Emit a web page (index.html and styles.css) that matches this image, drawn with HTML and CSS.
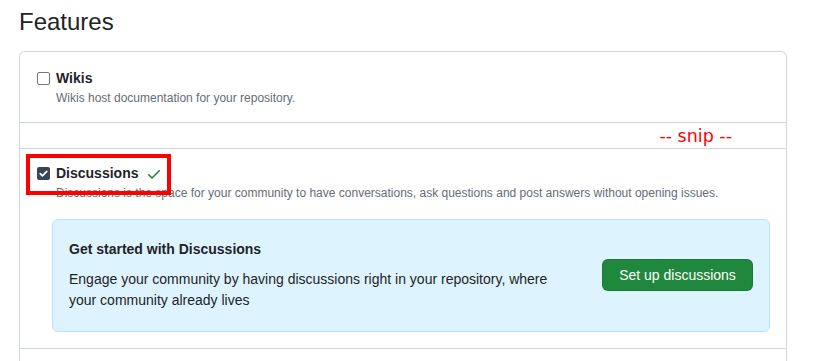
FILE: index.html
```html
<!DOCTYPE html>
<html>
<head>
<meta charset="utf-8">
<link rel="stylesheet" href="styles.css">
</head>
<body>
<h2 class="title">Features</h2>
<div class="box">
  <div class="row row-wiki">
    <div class="label-line">
      <span class="cb"></span>
      <span class="label">Wikis</span>
    </div>
    <p class="note">Wikis host documentation for your repository.</p>
  </div>
  <div class="snip-row"><span class="snip">-- snip --</span></div>
  <div class="row row-disc">
    <div class="label-line">
      <span class="cb cb-checked"><svg viewBox="0 0 13 13" width="13" height="13"><path d="M3.2 6.7l2.2 2.2 4.4-4.6" fill="none" stroke="#fff" stroke-width="1.7" stroke-linecap="round" stroke-linejoin="round"/></svg></span>
      <span class="label">Discussions</span>
      <svg class="ok" viewBox="0 0 16 16" width="16" height="16"><path fill="#1a7f37" d="M13.78 4.22a.75.75 0 0 1 0 1.06l-7.25 7.25a.75.75 0 0 1-1.06 0L2.22 9.28a.751.751 0 0 1 .018-1.042.751.751 0 0 1 1.042-.018L6 10.940l6.720-6.720a.75.75 0 0 1 1.06 0Z"/></svg>
    </div>
    <p class="note">Discussions is the space for your community to have conversations, ask questions and post answers without opening issues.</p>
    <div class="callout">
      <div class="callout-text">
        <h3 class="callout-title">Get started with Discussions</h3>
        <p class="callout-body">Engage your community by having discussions right in your repository, where your community already lives</p>
      </div>
      <button class="btn">Set up discussions</button>
    </div>
    <div class="highlight"></div>
  </div>
  <div class="row-rest"></div>
</div>
</body>
</html>
```

FILE: styles.css
```css
* { box-sizing: border-box; }
body {
  margin: 0;
  font-family: "Liberation Sans", Arial, sans-serif;
  color: #1f2328;
  background: #fff;
}
.title {
  margin: 4px 0 11px 19px;
  font-size: 24px;
  font-weight: 400;
  line-height: 36px;
}
.box {
  margin-left: 19px;
  width: 768px;
  border: 1px solid #d0d7de;
  border-radius: 6px;
  border-bottom: none;
  border-bottom-left-radius: 0;
  border-bottom-right-radius: 0;
}
.row {
  padding: 16px;
  border-bottom: 1px solid #d0d7de;
}
.row-wiki {
  padding-bottom: 15px;
}
.label-line {
  display: flex;
  align-items: center;
  height: 21px;
}
.cb {
  width: 13px;
  height: 13px;
  border: 1px solid #6e7781;
  border-radius: 2px;
  margin-left: 1px;
  margin-right: 6px;
  background: #fff;
  display: inline-flex;
}
.cb-checked {
  background: #3a4557;
  border-color: #3a4557;
  border-width: 0;
}
.label {
  font-size: 14px;
  font-weight: 700;
  line-height: 21px;
}
.ok {
  margin-left: 8px;
}
.note {
  margin: 0 0 0 20px;
  font-size: 12px;
  line-height: 18px;
  color: #656d76;
}
.snip-row {
  height: 26px;
  border-bottom: 1px solid #d0d7de;
  display: flex;
  justify-content: flex-end;
  align-items: center;
  padding-right: 54px;
}
.snip {
  font-family: "DejaVu Sans", sans-serif;
  font-size: 17.5px;
  color: #ff0000;
  line-height: 20px;
}
.row-disc {
  position: relative;
  padding-top: 14px;
}
.callout {
  margin: 17px 0 0 16px;
  background: #ddf4ff;
  border: 1px solid #b6e3ff;
  border-radius: 6px;
  padding: 19px 16px 20px 16px;
  display: flex;
  align-items: center;
}
.callout-text {
  flex: 1;
  margin-right: 40px;
}
.callout-title {
  margin: 0 0 9px 0;
  font-size: 14px;
  line-height: 21px;
  font-weight: 700;
}
.callout-body {
  margin: 0;
  font-size: 14px;
  line-height: 21px;
}
.btn {
  width: 151px;
  height: 32px;
  background: #1f883d;
  color: #fff;
  border: 1px solid rgba(31, 35, 40, 0.15);
  border-radius: 6px;
  font-family: "Liberation Sans", Arial, sans-serif;
  font-size: 14px;
  padding: 0 16px;
  white-space: nowrap;
}
.highlight {
  position: absolute;
  left: 6px;
  top: 5px;
  width: 145px;
  height: 41px;
  border: 4px solid #ff0000;
}
.row-rest {
  height: 30px;
}
```
